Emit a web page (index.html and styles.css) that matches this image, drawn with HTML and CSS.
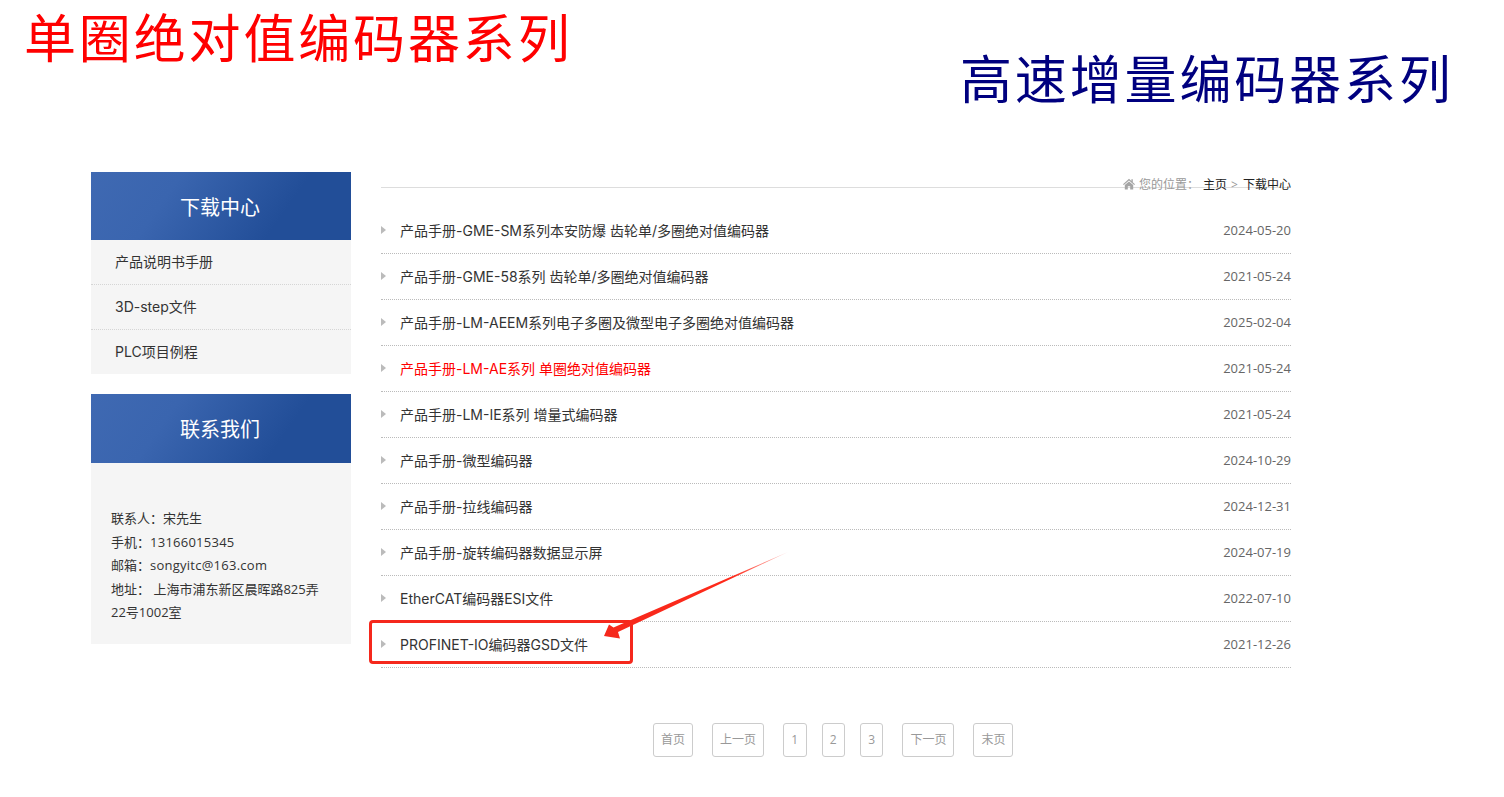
FILE: index.html
```html
<!DOCTYPE html>
<html lang="zh-CN">
<head>
<meta charset="utf-8">
<title>下载中心</title>
<link rel="stylesheet" href="styles.css">
</head>
<body>
<header class="banner">
  <div class="title-red">单圈绝对值编码器系列</div>
  <div class="title-blue">高速增量编码器系列</div>
</header>
<div class="wrap">
  <aside class="side">
    <section class="panel">
      <h2 class="panel-head">下载中心</h2>
      <ul class="side-nav">
        <li>产品说明书手册</li>
        <li>3D-step文件</li>
        <li>PLC项目例程</li>
      </ul>
    </section>
    <section class="panel">
      <h2 class="panel-head panel-head-b">联系我们</h2>
      <div class="contact">
        <p>联系人：宋先生</p>
        <p>手机：<span class="latin">13166015345</span></p>
        <p>邮箱：<span class="latin">songyitc@163.com</span></p>
        <p>地址： 上海市浦东新区晨晖路825弄22号1002室</p>
      </div>
    </section>
  </aside>
  <main class="main">
    <div class="crumb">
      <svg class="home" viewBox="0 0 12 12" width="12" height="12"><path d="M6 .8 0 6.200l.8.8L6 2.600 11.200 7l.8-.8-2.200-2V1.200H8.400v1.700zM1.800 7v4.600h3V8.200h2.400v3.400h3V7L6 3.500z" fill="#a5a5a5"/></svg>
      <span class="crumb-label">您的位置：</span>
      <span class="crumb-link">主页</span>
      <span class="crumb-sep">&gt;</span>
      <span class="crumb-link">下载中心</span>
    </div>
    <ul class="list">
      <li><span class="tri"></span><span class="name">产品手册-GME-SM系列本安防爆 齿轮单/多圈绝对值编码器</span><span class="date">2024-05-20</span></li>
      <li><span class="tri"></span><span class="name">产品手册-GME-58系列 齿轮单/多圈绝对值编码器</span><span class="date">2021-05-24</span></li>
      <li><span class="tri"></span><span class="name">产品手册-LM-AEEM系列电子多圈及微型电子多圈绝对值编码器</span><span class="date">2025-02-04</span></li>
      <li><span class="tri"></span><span class="name name-red">产品手册-LM-AE系列 单圈绝对值编码器</span><span class="date">2021-05-24</span></li>
      <li><span class="tri"></span><span class="name">产品手册-LM-IE系列 增量式编码器</span><span class="date">2021-05-24</span></li>
      <li><span class="tri"></span><span class="name">产品手册-微型编码器</span><span class="date">2024-10-29</span></li>
      <li><span class="tri"></span><span class="name">产品手册-拉线编码器</span><span class="date">2024-12-31</span></li>
      <li><span class="tri"></span><span class="name">产品手册-旋转编码器数据显示屏</span><span class="date">2024-07-19</span></li>
      <li><span class="tri"></span><span class="name">EtherCAT编码器ESI文件</span><span class="date">2022-07-10</span></li>
      <li><span class="tri"></span><span class="name">PROFINET-IO编码器GSD文件</span><span class="date">2021-12-26</span></li>
    </ul>
    <nav class="pager">
      <a class="pg">首页</a>
      <a class="pg">上一页</a>
      <span class="nums"><a class="pg">1</a><a class="pg">2</a><a class="pg">3</a></span>
      <a class="pg">下一页</a>
      <a class="pg">末页</a>
    </nav>
  </main>
</div>
<div class="mark-box"></div>
<svg class="mark-arrow" width="200" height="100" viewBox="0 0 200 100">
  <defs>
    <linearGradient id="fade" gradientUnits="userSpaceOnUse" x1="188" y1="2" x2="4" y2="86">
      <stop offset="0" stop-color="#ff2a1a" stop-opacity=".25"/>
      <stop offset=".3" stop-color="#ff2a1a"/>
      <stop offset="1" stop-color="#f5281c"/>
    </linearGradient>
  </defs>
  <path d="M4 86 9 74.500 13.500 77.500 188 2 18 82 20 88.500Z" fill="url(#fade)"/>
</svg>
</body>
</html>
```
FILE: styles.css
```css
* { box-sizing: border-box; }
html, body { margin: 0; padding: 0; background: #fff; }
body {
  width: 1504px;
  height: 797px;
  overflow: hidden;
  position: relative;
  font-family: "Open Sans", "Noto Sans CJK SC", sans-serif;
  color: #333;
}
ul { list-style: none; margin: 0; padding: 0; }
p, h2 { margin: 0; font-weight: 400; }

.banner { height: 172px; position: relative; }
.title-red, .title-blue {
  position: absolute;
  font-family: "Noto Sans CJK SC", sans-serif;
  font-size: 52px;
  line-height: 60px;
  letter-spacing: 2.850px;
  white-space: nowrap;
}
.title-red { left: 24px; top: 6px; color: #f00; }
.title-blue { left: 960px; top: 47px; color: #00007f; }

.wrap { display: flex; gap: 30px; margin-left: 91px; width: 1200px; }
.side { width: 260px; flex: none; display: flex; flex-direction: column; gap: 20px; }
.panel { background: #f5f5f5; }
.panel-head {
  height: 68px;
  line-height: 72px;
  padding-right: 2px;
  text-align: center;
  color: #fff;
  font-size: 20px;
  background: linear-gradient(125deg, #3f69b2 0%, #3a65af 30%, #224e98 72%, #224e98 100%);
}
.panel-head-b { height: 69px; }
.side-nav li {
  height: 45px;
  line-height: 44px;
  padding-left: 24px;
  font-family: "Inter", "Noto Sans CJK SC", sans-serif;
  font-size: 14px;
  border-bottom: 1px dotted #d5d5d5;
}
.side-nav li:last-child { height: 44px; border-bottom: 0; }
.contact { padding: 44px 20px 19px; font-size: 13px; line-height: 23.500px; }
.latin { letter-spacing: .25px; }

.main { width: 910px; flex: none; }
.crumb {
  height: 36px;
  padding-top: 4px;
  display: flex;
  justify-content: flex-end;
  align-items: flex-start;
  gap: 4px;
  font-size: 12px;
  line-height: 18px;
  background: linear-gradient(#ddd, #ddd) no-repeat 0 15px / 100% 1px;
}
.home { margin-top: 2px; }
.crumb-label { color: #999; }
.crumb-link { color: #222; }
.crumb-sep { color: #999; margin-right: 1px; }
.list li {
  height: 46px;
  padding-bottom: 1px;
  display: flex;
  align-items: center;
  border-bottom: 1px dotted #bbb;
  font-size: 14px;
}
.tri {
  width: 0;
  height: 0;
  margin-right: 14px;
  border-left: 5px solid #bbb;
  border-top: 4px solid transparent;
  border-bottom: 4px solid transparent;
}
.name { flex: 1; color: #333; font-family: "Inter", "Noto Sans CJK SC", sans-serif; }
.name-red { color: #f00; }
.date { font-size: 13px; color: #666; }

.pager { display: flex; gap: 19px; margin-top: 55px; margin-left: 272px; }
.nums { display: flex; gap: 15px; }
.pg {
  display: block;
  height: 34px;
  line-height: 32px;
  padding: 0 7px;
  font-size: 12px;
  color: #999;
  border: 1px solid #ccc;
  border-radius: 3px;
}
.nums .pg { padding: 0 7.300px; }

.mark-box {
  position: absolute;
  left: 369px;
  top: 620px;
  width: 264px;
  height: 44px;
  border: 3px solid #f5281c;
  border-radius: 4px;
}
.mark-arrow { position: absolute; left: 600px; top: 550px; }
```
